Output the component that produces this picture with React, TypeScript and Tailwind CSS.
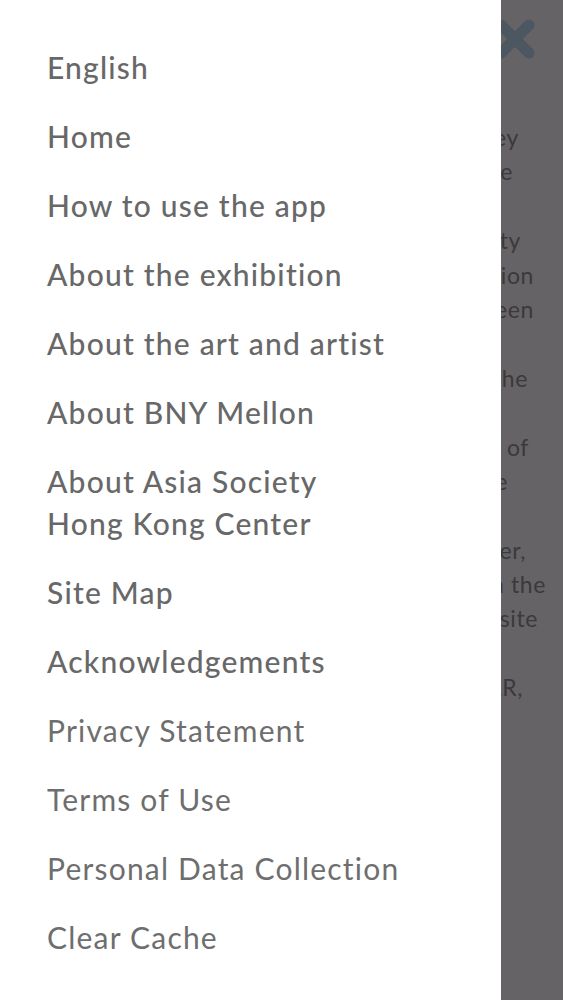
import React from "react";

// Navigation drawer items; "medium" ones are the main sections
const menuItems: { label: React.ReactNode; strong: boolean }[] = [
  { label: "English", strong: true },
  { label: "Home", strong: true },
  { label: "How to use the app", strong: true },
  { label: "About the exhibition", strong: true },
  { label: "About the art and artist", strong: true },
  { label: "About BNY Mellon", strong: true },
  {
    label: (
      <>
        About Asia Society
        <br />
        Hong Kong Center
      </>
    ),
    strong: true,
  },
  { label: "Site Map", strong: true },
  { label: "Acknowledgements", strong: true },
  { label: "Privacy Statement", strong: false },
  { label: "Terms of Use", strong: false },
  { label: "Personal Data Collection", strong: false },
  { label: "Clear Cache", strong: false },
];

// Page text behind the drawer, only the line endings peek out
const pageLines: { text: string; cls: string }[] = [
  { text: "key", cls: "pr-[44px]" },
  { text: "the", cls: "pr-[50px]" },
  { text: "", cls: "" },
  { text: "city", cls: "pr-[42px]" },
  { text: "ation", cls: "pr-[29px]" },
  { text: "between", cls: "pr-[29px]" },
  { text: "", cls: "" },
  { text: "the", cls: "pr-[35px]" },
  { text: "", cls: "" },
  { text: "t of", cls: "pr-[34px]" },
  { text: "the", cls: "pr-[55px]" },
  { text: "", cls: "" },
  { text: "ever,", cls: "pr-[37px]" },
  { text: "in the", cls: "pr-[17px]" },
  { text: "website", cls: "pr-[25px]" },
  { text: "", cls: "" },
  { text: "SAR,", cls: "pr-[40px]" },
];

function PageBehind() {
  return (
    <div className="flex flex-col pt-[120px] text-[23px] leading-[34.4px] tracking-[0.6px] text-[#3b393b]">
      {pageLines.map((line, i) => (
        <div key={i} className={`h-[34.4px] whitespace-nowrap text-right ${line.cls}`}>
          {line.text}
        </div>
      ))}
    </div>
  );
}

function CloseIcon() {
  return (
    <svg
      className="absolute left-[494px] top-[18px]"
      width="42"
      height="42"
      viewBox="0 0 42 42"
      fill="none"
      stroke="#4c5761"
      strokeWidth="11"
      strokeLinecap="round"
    >
      <path d="M7 7 L35 35 M35 7 L7 35" />
    </svg>
  );
}

export default function App() {
  return (
    <div
      className="relative h-[1000px] w-full overflow-hidden bg-[#656365]"
      style={{ fontFamily: "Lato, 'Noto Sans', sans-serif" }}
    >
      <CloseIcon />
      <PageBehind />

      {/* Drawer */}
      <nav className="absolute left-0 top-0 h-full w-[501px] bg-white">
        <ul className="flex flex-col gap-[27px] pl-[47px] pt-[46px]">
          {menuItems.map((item, i) => (
            <li
              key={i}
              className={`whitespace-nowrap text-[30px] leading-[42px] tracking-[1.2px] ${
                item.strong ? "font-medium text-[#686868]" : "font-normal text-[#6e6e6e]"
              }`}
            >
              {item.label}
            </li>
          ))}
        </ul>
      </nav>
    </div>
  );
}
